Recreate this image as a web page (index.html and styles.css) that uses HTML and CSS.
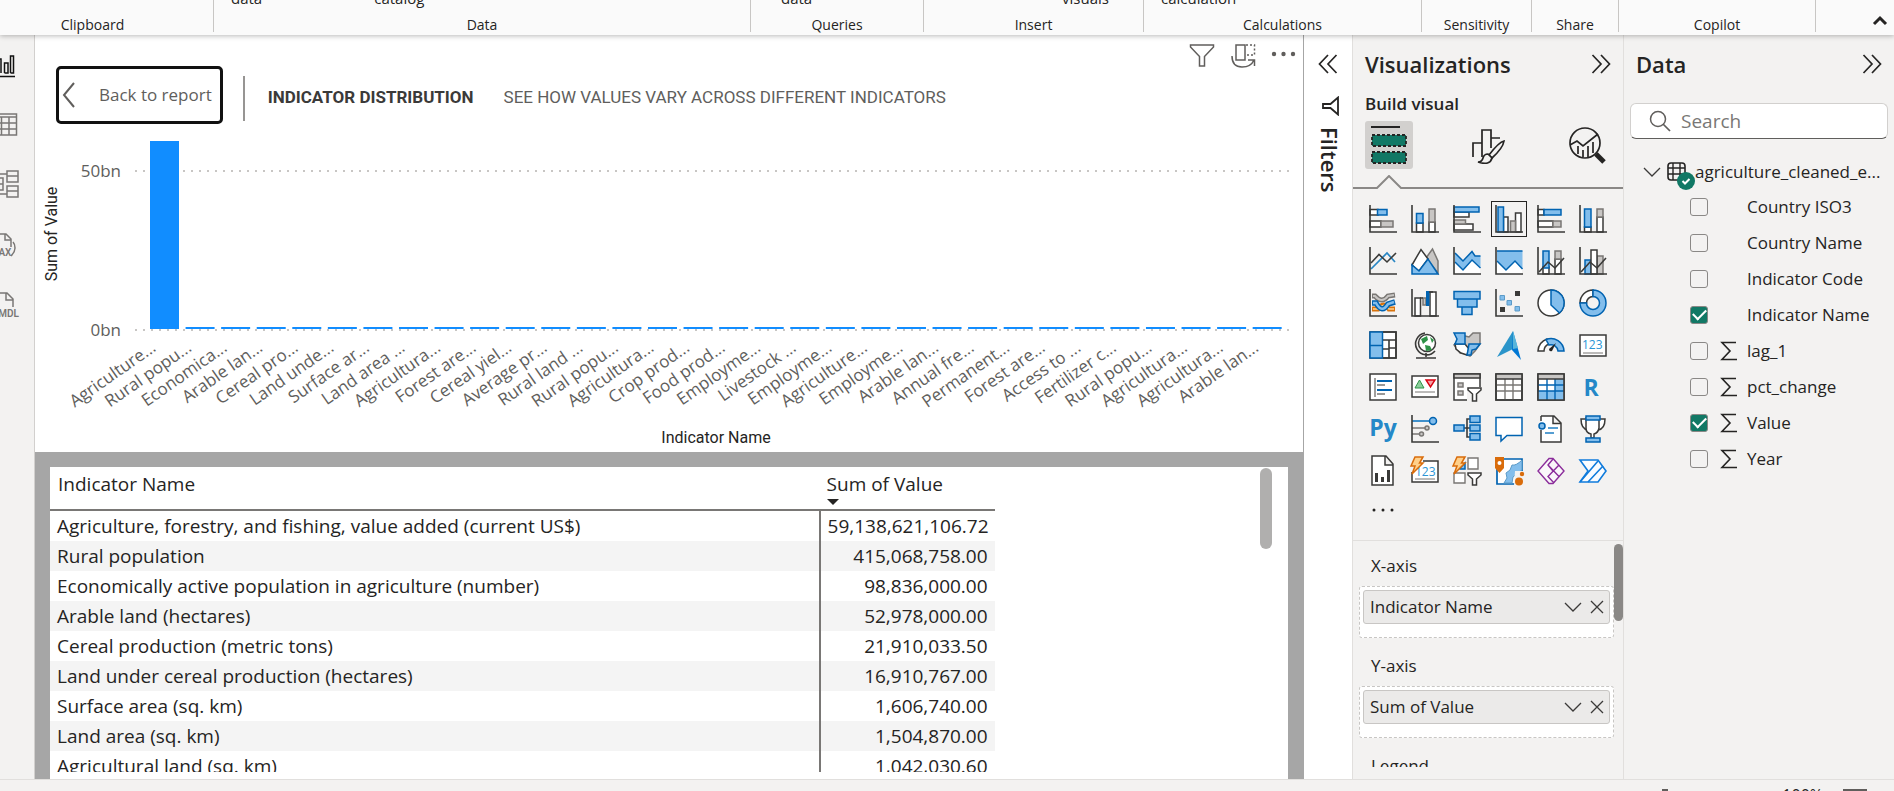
FILE: index.html
```html
<!DOCTYPE html>
<html lang="en">
<head>
<meta charset="utf-8">
<title>Indicator distribution</title>
<meta name="viewport" content="width=device-width, initial-scale=1">
<link rel="stylesheet" href="styles.css">
</head>
<body>
<header class="ribbon">
  <div class="group group-clipboard"><div class="group-name">Clipboard</div></div>
  <div class="group"><div class="tools"><span>data</span><span>catalog</span></div><div class="group-name">Data</div></div>
  <div class="group"><div class="tools tools-mid"><span>data</span></div><div class="group-name">Queries</div></div>
  <div class="group"><div class="tools tools-end"><span>visuals</span></div><div class="group-name">Insert</div></div>
  <div class="group"><div class="tools"><span>calculation</span></div><div class="group-name">Calculations</div></div>
  <div class="group"><div class="group-name">Sensitivity</div></div>
  <div class="group"><div class="group-name">Share</div></div>
  <div class="group"><div class="group-name">Copilot</div></div>
  <div class="group-last"><button class="plain" aria-label="Collapse ribbon"><svg width="16" height="12" viewBox="0 0 16 12"><path d="M2 9l6-6 6 6" fill="none" stroke="#252423" stroke-width="3"/></svg></button></div>
</header>

<div class="workspace">
  <nav class="rail" aria-label="Views">
    <button class="plain" aria-label="Report view"><svg width="35" height="28" viewBox="0 0 35 28" fill="none" stroke="#111" stroke-width="1.5"><path d="M-2 8H1V22M4.500 22V12H8V22H4.500M10.500 22V5H13.500V22H10.500M-3 25.500H15"/></svg></button>
    <button class="plain" aria-label="Table view"><svg width="35" height="28" viewBox="0 0 35 28" fill="none" stroke="#797775" stroke-width="1.5"><path d="M-2 3H16.500V24H-2M-2 6H16M-2 12H16M-2 18H16M1.500 6V24M9 6V24"/></svg></button>
    <button class="plain" aria-label="Model view"><svg width="35" height="30" viewBox="0 0 35 30" fill="none" stroke="#797775" stroke-width="1.5"><path d="M7 1H18V12H7zM7 6H18M7 16H18V27H7zM7 21H18M-2 8H3V20H-2M-2 14H3M-1 4H7M-1 24H7"/></svg></button>
    <button class="plain" aria-label="DAX query view"><svg width="35" height="28" viewBox="0 0 35 28" fill="none" stroke="#797775" stroke-width="1.5"><path d="M-2 3H6L11 8V16M5 3V9H11M13 11q2 2 2 6t-4 8"/><text x="-8" y="25" class="rail-text">DAX</text></svg></button>
    <button class="plain" aria-label="TMDL view"><svg width="35" height="28" viewBox="0 0 35 28" fill="none" stroke="#797775" stroke-width="1.5"><path d="M-2 2H7L13 8V16M6 2V9H13"/><text x="-8" y="26" class="rail-text">TMDL</text></svg></button>
  </nav>

  <main class="canvas">
    <section class="visual">
      <div class="visual-head">
        <button class="back"><svg width="14" height="28" viewBox="0 0 14 28"><path d="M12 2L2 14 12 26" fill="none" stroke="#605e5c" stroke-width="2"/></svg><span>Back to report</span></button>
        <div class="titles"><h1>INDICATOR DISTRIBUTION</h1><p>SEE HOW VALUES VARY ACROSS DIFFERENT INDICATORS</p></div>
        <div class="visual-tools">
          <button class="plain" aria-label="Filters on this visual"><svg width="26" height="26" viewBox="0 0 26 26"><path d="M1.500 2H24.500V4L15.500 13.500V23H10.500V13.500L1.500 4z" fill="none" stroke="#605e5c" stroke-width="1.5"/></svg></button>
          <button class="plain" aria-label="Switch layout"><svg width="26" height="26" viewBox="0 0 26 26" fill="none" stroke="#605e5c" stroke-width="1.5"><path d="M6 2H15V17H6zM2 13q0 11 10 11 9 0 12-7M18 17H24.500V23"/><path d="M16 2H24.500V12H16" stroke-dasharray="2 2"/></svg></button>
          <button class="plain" aria-label="More options"><svg width="26" height="26" viewBox="0 0 26 26" fill="#605e5c"><circle cx="3" cy="11" r="2.200"/><circle cx="12.500" cy="11" r="2.200"/><circle cx="22" cy="11" r="2.200"/></svg></button>
        </div>
      </div>
      <svg class="chart" id="chart" viewBox="0 0 1268 328" role="img" aria-label="Sum of Value by Indicator Name"></svg>
    </section>
    <section class="data-area">
      <div class="data-sheet">
        <div class="table-clip">
        <table>
          <thead><tr><th scope="col">Indicator Name</th><th scope="col" class="value-col">Sum of Value<svg class="sort" width="12" height="8" viewBox="0 0 12 8"><path d="M0 1H12L6 7z" fill="#252423"/></svg></th></tr></thead>
          <tbody>
            <tr><td>Agriculture, forestry, and fishing, value added (current US$)</td><td>59,138,621,106.72</td></tr>
            <tr><td>Rural population</td><td>415,068,758.00</td></tr>
            <tr><td>Economically active population in agriculture (number)</td><td>98,836,000.00</td></tr>
            <tr><td>Arable land (hectares)</td><td>52,978,000.00</td></tr>
            <tr><td>Cereal production (metric tons)</td><td>21,910,033.50</td></tr>
            <tr><td>Land under cereal production (hectares)</td><td>16,910,767.00</td></tr>
            <tr><td>Surface area (sq. km)</td><td>1,606,740.00</td></tr>
            <tr><td>Land area (sq. km)</td><td>1,504,870.00</td></tr>
            <tr><td>Agricultural land (sq. km)</td><td>1,042,030.60</td></tr>
          </tbody>
        </table>
        </div>
        <div class="table-thumb"></div>
      </div>
    </section>
  </main>

  <aside class="filters">
    <button class="plain" aria-label="Expand filters"><svg width="20" height="20" viewBox="0 0 20 20"><path d="M10 1L1.500 10 10 19M18.500 1L10 10 18.500 19" fill="none" stroke="#252423" stroke-width="1.700"/></svg></button>
    <svg class="filters-icon" width="20" height="20" viewBox="0 0 20 20"><path d="M17 1.500V18.500L9.500 12H2V8H9.500z" fill="none" stroke="#252423" stroke-width="1.800"/></svg>
    <h2>Filters</h2>
  </aside>

  <aside class="pane viz">
    <div class="pane-head"><h2>Visualizations</h2><button class="plain" aria-label="Collapse visualizations"><svg width="20" height="20" viewBox="0 0 20 20"><path d="M1.500 1L10 10 1.500 19M10 1L18.500 10 10 19" fill="none" stroke="#252423" stroke-width="1.700"/></svg></button></div>
    <h3>Build visual</h3>
    <div class="tabs">
      <button class="tab tab-on" aria-label="Build visual"><svg width="36" height="40" viewBox="0 0 36 40"><path d="M0 2H29" stroke="#252423" stroke-width="2"/><rect x="1" y="10" width="34" height="11" fill="#117865" stroke="#252423" stroke-width="1.800" stroke-dasharray="3 2"/><rect x="1" y="27" width="34" height="11" fill="#117865" stroke="#252423" stroke-width="1.800" stroke-dasharray="3 2"/></svg></button>
      <button class="tab" aria-label="Format visual"><svg width="36" height="38" viewBox="0 0 36 38" fill="none" stroke="#252423" stroke-width="1.700"><path d="M3 31V17H12M12 31V4H21V22M21 12H30"/><path d="M34 15q-5 1-15 14l3 3q11-10 12-17z" fill="#f3f2f1"/><path d="M18 28q-4 0-5 4-1 4-5 4 12 4 14-4z" fill="#f3f2f1"/></svg></button>
      <button class="tab" aria-label="Analytics"><svg width="38" height="38" viewBox="0 0 38 38" fill="none" stroke="#252423" stroke-width="1.700"><circle cx="17" cy="17" r="15"/><path d="M2 19l7-4 6 5L30 8M10 20V28M15 24V31M20 20V31M25 16V27"/><path d="M28 28l8 8" stroke-width="5"/></svg></button>
    </div>
    <div class="tab-edge"><span></span><svg width="26" height="14" viewBox="0 0 26 14"><path d="M0 13H1L13 1 25 13H26" fill="none" stroke="#8a8886" stroke-width="2"/></svg><span class="rest"></span></div>

    <div class="gallery">
      <button aria-label="Stacked bar chart"><svg viewBox="0 0 28 28"><path class="w" d="M1 4.500H9V10H1zM1 16H12V22H1z"/><path class="g" d="M12 16H24V22H12z"/><path class="b" d="M8.500 4.500H18V10H8.500z"/><path class="ax" d="M1 0V27H28"/></svg></button>
      <button aria-label="Stacked column chart"><svg viewBox="0 0 28 28"><path class="w" d="M5.500 18H12V27H5.500zM18 17H24V27H18z"/><path class="g" d="M18 4H24V17H18z"/><path class="b" d="M5.500 8.500H12V18H5.500z"/><path class="ax" d="M1 0V27H28"/></svg></button>
      <button aria-label="Clustered bar chart"><svg viewBox="0 0 28 28"><path class="w" d="M1 7H16V12H1zM1 19H20V25H1z"/><path class="g" d="M1 15H12.500V19H1z"/><path class="b" d="M1 2H26V7H1z"/><path class="ax" d="M1 0V27H28"/></svg></button>
      <button class="picked" aria-label="Clustered column chart" aria-pressed="true"><svg viewBox="0 0 28 28"><path class="w" d="M8.500 12H13V27H8.500zM20.500 8H26V27H20.500z"/><path class="g" d="M15.500 16H20.500V27H15.500z"/><path class="b" d="M3 2H8.500V27H3z"/><path class="ax" d="M1 0V27H28"/></svg></button>
      <button aria-label="100% stacked bar chart"><svg viewBox="0 0 28 28"><path class="w" d="M1 4.500H7V10H1zM1 16H16V22H1z"/><path class="g" d="M16 16H24V22H16z"/><path class="b" d="M7 4.500H24V10H7z"/><path class="ax" d="M1 0V27H28"/></svg></button>
      <button aria-label="100% stacked column chart"><svg viewBox="0 0 28 28"><path class="w" d="M5.500 22H12V27H5.500zM18 12H24V27H18z"/><path class="g" d="M18 4H24V12H18z"/><path class="b" d="M5.500 4H12V22H5.500z"/><path class="ax" d="M1 0V27H28"/></svg></button>

      <button aria-label="Line chart"><svg viewBox="0 0 28 28"><path d="M2 22L18 6 26 15" fill="none" stroke="#2886c4" stroke-width="1.700"/><path class="d" d="M2 16L10 7.500 18 15 27 6"/><path class="ax" d="M1 0V27H28"/></svg></button>
      <button aria-label="Area chart"><svg viewBox="0 0 28 28"><path class="g" d="M15 11L21.500 2 27 14V26z"/><path class="w" d="M1 18L10 2.500 17 12 8 24z"/><path class="b" d="M1 18L8 24 17 12 27 27H1z"/></svg></button>
      <button aria-label="Stacked area chart"><svg viewBox="0 0 28 28"><path fill="#fff" d="M2 14V27H27V14z"/><path fill="#83beec" d="M2 6L10 14 19 4.500 22 9H27.500V20L19 13 10 23 2 15z"/><path class="l" d="M2 6L10 14 19 4.500 22 9H27.500M2 15L10 23 19 13 27.500 21"/><path class="ax" d="M1 0V27H28"/></svg></button>
      <button aria-label="100% stacked area chart"><svg viewBox="0 0 28 28"><path fill="#fff" d="M2 14V27H27V14z"/><path fill="#83beec" d="M2 4H27.500V22L20 14 11 23 2 14z"/><path class="l" d="M2 4H27.500M2 14L11 23 20 14 27.500 22"/><path class="ax" d="M1 0V27H28"/></svg></button>
      <button aria-label="Line and stacked column chart"><svg viewBox="0 0 28 28"><path class="w" d="M6 20H12V27H6zM18 12H24V27H18z"/><path class="g" d="M18 4H24V12H18z"/><path class="b" d="M6 4H12V21H6z"/><path class="d" d="M2 25L11 15 18 21 27 11"/><path class="ax" d="M1 0V27H28"/></svg></button>
      <button aria-label="Line and clustered column chart"><svg viewBox="0 0 28 28"><path class="g" d="M18 9H24V27H18z"/><path class="b" d="M6 13H12V27H6z"/><path class="w" d="M12 3H18V27H12z"/><path class="d" d="M2 25L11 15 18 21 27 11"/><path class="ax" d="M1 0V27H28"/></svg></button>

      <button aria-label="Ribbon chart"><svg viewBox="0 0 28 28" fill="none"><path d="M3 20H9q6-8 11 0h6" stroke="#d9730d" stroke-width="5"/><path d="M4 20H9q6-7 11 0h5" stroke="#ffd591" stroke-width="1.5"/><path d="M3 7H6q7 8 13 0l7-1" stroke="#797774" stroke-width="5"/><path d="M4 7H6q7 8 13 0l6-1" stroke="#c8c6c4" stroke-width="2"/><path d="M3 14h4q6 11 12 1l7-2" stroke="#0063b1" stroke-width="5.500"/><path d="M4 14h3q6 11 12 1l6-2" stroke="#83beec" stroke-width="2.500"/><path class="ax" d="M1 0V27H28"/></svg></button>
      <button aria-label="Waterfall chart"><svg viewBox="0 0 28 28"><path class="w" d="M4 9H9.500V27H4zM19 3H25V27H19z"/><path class="g" d="M12 9H15V16H12z"/><path d="M15 2H18.500V17H15z" fill="#0063b1"/><path class="d" d="M9 9H12M18 3H22"/><path class="ax" d="M1 0V27H28"/></svg></button>
      <button aria-label="Funnel chart"><svg viewBox="0 0 28 28"><path class="b" d="M1 2.500H27V10H1zM4.500 10H24V18H4.500zM9 18H19V25.500H9z"/></svg></button>
      <button aria-label="Scatter chart"><svg viewBox="0 0 28 28"><path d="M20 2H25V7H20zM5 18H10V23H5z" fill="#3a3a38"/><path d="M5 6.500H9.500V11H5zM12 11.500H16.500V16H12zM20 17.500H24.500V22H20z" fill="#83beec" stroke="#5b9bc8"/><path class="ax" d="M1 0V27H28"/></svg></button>
      <button aria-label="Pie chart"><svg viewBox="0 0 28 28"><circle class="w" cx="14" cy="14" r="13"/><path class="b" d="M14 1A13 13 0 0 1 22.500 24L14 16z"/></svg></button>
      <button aria-label="Donut chart"><svg viewBox="0 0 28 28"><path class="w" d="M14 1A13 13 0 0 0 1 14H7.500A6.500 6.500 0 0 1 14 7.500z"/><path class="b" d="M14 1A13 13 0 1 1 1 14H7.500A6.500 6.500 0 1 0 14 7.500z"/></svg></button>

      <button aria-label="Treemap"><svg viewBox="0 0 28 28"><path class="w" d="M1 1H27V27H1z"/><path class="b" d="M1 1H13.500V27H1zM1 14.500H13.500"/><path class="d" d="M14 9H27M20 9V27M14 18H20M20 17H27M14 1H27V27H14"/></svg></button>
      <button aria-label="Map"><svg viewBox="0 0 28 28"><circle class="w" cx="16" cy="12" r="8.500"/><path d="M10 8l6-3 1 4-5 4zM19 6l4 3-2 3zM14 14l5 1 2 4-6 1z" fill="#2d9246"/><path class="d" d="M14 2A11 11 0 1 0 24 20M15 22V26M5 27H25"/></svg></button>
      <button aria-label="Filled map"><svg viewBox="0 0 28 28"><path class="g" d="M12 5L16 6 20 2H27V13L22 20 17 25 10 22 7 22 1 14z"/><path class="w" d="M2 13H12L16 18 14 24 8 22 3 18z"/><path class="b" d="M1 2H12V13H2L4 8zM16 13H27L23 18 19 19 18 24 14 24 15 19z"/></svg></button>
      <button aria-label="Azure map"><svg viewBox="0 0 28 28"><path d="M18 0L2 26 18 18z" fill="#2b95ca"/><path d="M18 0L26 29 17 19z" fill="#0078d4"/><path d="M18 0L23 17 18 18z" fill="#58b5da"/></svg></button>
      <button aria-label="Gauge"><svg viewBox="0 0 28 28"><path class="w" d="M1 20A13 13 0 0 1 10 8L12 13Q7 15 7 20z"/><path class="b" d="M9 8.500A13 13 0 0 1 27 20H21A7 7 0 0 0 12 14z"/><path d="M12 18L19 12 15 20q-3 1-3-2z" fill="#252423"/></svg></button>
      <button aria-label="Card"><svg viewBox="0 0 28 28"><path class="w" d="M1 4H27V25H1z"/><text x="3" y="18" class="num">123</text><path d="M4 22H24" stroke="#797774"/></svg></button>

      <button aria-label="Multi-row card"><svg viewBox="0 0 28 28"><path class="w" d="M1 1H27V27H1z"/><path d="M6 5V24M8 12H16M8 21H16" stroke="#797774" stroke-width="1.400"/><path d="M8 8H23M8 17H23" stroke="#0063b1" stroke-width="2.200"/></svg></button>
      <button aria-label="KPI"><svg viewBox="0 0 28 28"><path class="w" d="M1 3H27V24H1z"/><path d="M4 15L8.500 7 13 15z" fill="#8ccf9c" stroke="#2d9246"/><path d="M15 7H24L19.500 14z" fill="#f5a3a8" stroke="#d8000f" stroke-width="1.400"/><path d="M4 19H24" stroke="#797774"/></svg></button>
      <button aria-label="Slicer"><svg viewBox="0 0 28 28"><path class="w" d="M1 1H27V27H1z"/><path class="g" d="M5 10H10V14H5zM5 18H10V22H5z"/><path d="M1 1H27V5H1z" fill="#c8c6c4" stroke="#3a3a38" stroke-width="1.5"/><path d="M14 14H29V29H14z" fill="#f3f2f1"/><path class="w" d="M15 15H28V17L23.500 21V28H19.500V21L15 17z"/></svg></button>
      <button aria-label="Table"><svg viewBox="0 0 28 28"><path class="w" d="M1 1H27V27H1z"/><path d="M1 1H27V6H1z" fill="#c8c6c4"/><path d="M1 12H27M1 18H27M10 6V27M18 6V27" stroke="#797774" stroke-width="1.400"/><path class="d" d="M1 1H27V27H1zM1 6H27"/></svg></button>
      <button aria-label="Matrix"><svg viewBox="0 0 28 28"><path class="w" d="M1 1H27V27H1z"/><path d="M1 18H18V6H27V27H1z" fill="#83beec"/><path d="M1 1H27V6H1z" fill="#c8c6c4"/><path d="M1 12H27M1 18H27M10 6V27M18 6V27" stroke="#0063b1" stroke-width="1.400"/><path class="d" d="M1 1H27V27H1zM1 6H27"/></svg></button>
      <button aria-label="R script visual"><svg viewBox="0 0 28 28"><text x="12" y="23" text-anchor="middle" class="lang">R</text></svg></button>

      <button aria-label="Python visual"><svg viewBox="0 0 28 28"><text x="14" y="21" text-anchor="middle" class="lang">Py</text></svg></button>
      <button aria-label="Key influencers"><svg viewBox="0 0 28 28"><path d="M1 6H20" stroke="#1f7fc4" stroke-width="1.700"/><path d="M1 13H14M1 19H9" stroke="#797774" stroke-width="1.5"/><circle class="b" cx="22" cy="6" r="3.500"/><circle class="g" cx="16" cy="13" r="2"/><circle class="g" cx="10.500" cy="19" r="2"/><path class="ax" d="M1 0V27H28"/></svg></button>
      <button aria-label="Decomposition tree"><svg viewBox="0 0 28 28"><path class="d" d="M11 13H17M17 4H14V22H17"/><path class="b" d="M1 10H11V16H1zM17 1H27V7.500H17zM17 10H27V16H17zM17 18.500H27V25H17z"/></svg></button>
      <button aria-label="Q&amp;A"><svg viewBox="0 0 28 28"><path class="w wb" d="M1 2.500H27V20.500H12L6 26V20.500H1z"/></svg></button>
      <button aria-label="Narrative"><svg viewBox="0 0 28 28"><path class="w" d="M4 1H17L24 8V27H4V15M4 6V1M16 1V8.500H24"/><circle class="b" cx="5" cy="11" r="3"/><path d="M11 13H21M8 18H17" stroke="#1f7fc4" stroke-width="1.5"/></svg></button>
      <button aria-label="Goals"><svg viewBox="0 0 28 28"><path class="w" d="M7 4H2q0 10 7 11M20 4h6q0 10-7 11"/><path class="w" d="M7 3H20V13q-1 5-5 6v4H12V19q-5-1-5-6z"/><path class="b" d="M7 1H21V5H7zM7 23H21V27H7z"/></svg></button>

      <button aria-label="Paginated report"><svg viewBox="0 0 28 28"><path class="w" d="M3 -1H17L24 7V28H3zM16 -1V8H24"/><path d="M6 16H9V25H6zM12 20H15V25H12zM18 13H21V25H18z" fill="#3a3a38"/></svg></button>
      <button aria-label="Card (new)"><svg viewBox="0 0 28 28"><path class="w" d="M12 4H27V25H1V15"/><text x="4" y="19" class="num">123</text><path d="M4 22H24" stroke="#797774"/><path class="bolt" d="M4 0H12L8.500 6H12L1 17 4 9H0z"/></svg></button>
      <button aria-label="Slicer (new)"><svg viewBox="0 0 28 28"><path d="M15 1H25V12H15zM1 16H12V26H1zM15 16H20V20" fill="#fff" stroke="#797774" stroke-width="1.400"/><path class="b" d="M7 11L12 6V12H7z"/><path d="M14 15H29V29H14z" fill="#f3f2f1"/><path class="w" d="M15 16H28V18L23.500 22V28H19.500V22L15 18z"/><path class="bolt" d="M4 0H12L8.500 6H12L1 17 4 9H0z"/></svg></button>
      <button aria-label="ArcGIS map"><svg viewBox="0 0 28 28"><path d="M2 2H27V27H2z" fill="#fff" stroke="#0063b1" stroke-width="1.700"/><path d="M27 3q-6 6-10 5l-2 5-4 3 1 5-3 5H17l1-6 6-5 3-2z" fill="#83beec" stroke="#5b9bc8"/><path d="M20 14h9v14h-10z" fill="#f3f2f1"/><path d="M0 0H9V11L4.500 16 0 11z" fill="#d96c0b"/><circle cx="4.500" cy="6" r="2" fill="#fff"/><circle cx="24" cy="24.500" r="4" fill="#d96c0b"/><circle cx="27" cy="17" r="2.200" fill="#d96c0b"/></svg></button>
      <button aria-label="Power Apps"><svg viewBox="0 0 28 28" fill="#faf7fa" stroke="#8b2d9b" stroke-width="1.400"><path d="M12 1.500L1 14 12 26.500 16 26.500 27 14 16 1.500z"/><path d="M16 2L11 8 22 19.500M22 8L11 19.500 17 26M11 8L16 14" fill="none"/></svg></button>
      <button aria-label="Power Automate"><svg viewBox="0 0 28 28" fill="#fafcff" stroke="#0f7bdc" stroke-width="1.600"><path d="M1 3H19L27 14 19 25H1L9 14z"/><path d="M9 25L24 9M1 25L19 4" fill="none"/></svg></button>
    </div>
    <button class="plain more" aria-label="Get more visuals"><svg width="24" height="8" viewBox="0 0 24 8" fill="#252423"><circle cx="3" cy="4" r="1.500"/><circle cx="12" cy="4" r="1.500"/><circle cx="21" cy="4" r="1.500"/></svg></button>

    <div class="wells">
      <div class="well-list">
        <h4>X-axis</h4>
        <div class="well"><div class="chip"><span>Indicator Name</span><button class="plain" aria-label="Indicator Name options"><svg width="18" height="12" viewBox="0 0 18 12"><path d="M1 2L9 10 17 2" fill="none" stroke="#3b3a39" stroke-width="1.300"/></svg></button><button class="plain" aria-label="Remove Indicator Name"><svg width="14" height="14" viewBox="0 0 14 14"><path d="M1 1L13 13M13 1L1 13" fill="none" stroke="#3b3a39" stroke-width="1.300"/></svg></button></div></div>
        <h4>Y-axis</h4>
        <div class="well"><div class="chip"><span>Sum of Value</span><button class="plain" aria-label="Sum of Value options"><svg width="18" height="12" viewBox="0 0 18 12"><path d="M1 2L9 10 17 2" fill="none" stroke="#3b3a39" stroke-width="1.300"/></svg></button><button class="plain" aria-label="Remove Sum of Value"><svg width="14" height="14" viewBox="0 0 14 14"><path d="M1 1L13 13M13 1L1 13" fill="none" stroke="#3b3a39" stroke-width="1.300"/></svg></button></div></div>
        <h4>Legend</h4>
      </div>
      <div class="wells-thumb"></div>
    </div>
  </aside>

  <aside class="pane fields">
    <div class="pane-head"><h2>Data</h2><button class="plain" aria-label="Collapse data"><svg width="20" height="20" viewBox="0 0 20 20"><path d="M1.500 1L10 10 1.500 19M10 1L18.500 10 10 19" fill="none" stroke="#252423" stroke-width="1.700"/></svg></button></div>
    <label class="search"><svg width="22" height="22" viewBox="0 0 22 22"><circle cx="9" cy="9" r="7.500" fill="none" stroke="#605e5c" stroke-width="1.5"/><path d="M14 14L21 21" stroke="#605e5c" stroke-width="1.700"/></svg><input type="search" placeholder="Search" aria-label="Search"></label>
    <div class="source"><svg width="18" height="12" viewBox="0 0 18 12"><path d="M1 2L9 10 17 2" fill="none" stroke="#3b3a39" stroke-width="1.300"/></svg><svg class="source-icon" width="28" height="28" viewBox="0 0 28 28" fill="none"><rect x="1" y="1" width="17" height="17" rx="3" stroke="#252423" stroke-width="1.600"/><path d="M1 6H18M1 12H18M6 1V18M13 1V18" stroke="#252423" stroke-width="1.400"/><circle cx="19" cy="19" r="9" fill="#117865"/><path d="M15.500 19l2.500 2.500 4.500-4.500" stroke="#fff" stroke-width="2"/></svg><span>agriculture_cleaned_e...</span></div>
    <ul class="field-list">
      <li><label><input type="checkbox"><i></i><span>Country ISO3</span></label></li>
      <li><label><input type="checkbox"><i></i><span>Country Name</span></label></li>
      <li><label><input type="checkbox"><i></i><span>Indicator Code</span></label></li>
      <li><label><input type="checkbox" checked><i></i><span>Indicator Name</span></label></li>
      <li><label><input type="checkbox"><svg class="sigma" viewBox="0 0 18 20"><path d="M16 1.500H2L10 10 2 18.500H17" fill="none" stroke="#252423" stroke-width="1.600"/></svg><span>lag_1</span></label></li>
      <li><label><input type="checkbox"><svg class="sigma" viewBox="0 0 18 20"><path d="M16 1.500H2L10 10 2 18.500H17" fill="none" stroke="#252423" stroke-width="1.600"/></svg><span>pct_change</span></label></li>
      <li><label><input type="checkbox" checked><svg class="sigma" viewBox="0 0 18 20"><path d="M16 1.500H2L10 10 2 18.500H17" fill="none" stroke="#252423" stroke-width="1.600"/></svg><span>Value</span></label></li>
      <li><label><input type="checkbox"><svg class="sigma" viewBox="0 0 18 20"><path d="M16 1.500H2L10 10 2 18.500H17" fill="none" stroke="#252423" stroke-width="1.600"/></svg><span>Year</span></label></li>
    </ul>
  </aside>
</div>

<footer class="status"><i class="zoom-knob"></i><span>100%</span><i class="fit"></i></footer>
<script src="chart.js"></script>
</body>
</html>
```
FILE: styles.css
```css
* { box-sizing: border-box; }
html, body { height: 100%; }
body {
  margin: 0;
  display: flex;
  flex-direction: column;
  overflow: hidden;
  background: #f3f2f1;
  color: #252423;
  font: 17px/20px "Open Sans", "Noto Sans", sans-serif;
}
h1, h2, h3, h4, p, ul { margin: 0; padding: 0; font: inherit; }
ul { list-style: none; }
button { font: inherit; color: inherit; cursor: pointer; }
svg { display: block; flex: none; }
.plain { border: 0; padding: 0; background: none; display: flex; align-items: center; }

/* Ribbon */
.ribbon {
  flex: none;
  height: 35px;
  display: grid;
  grid-template-columns: 214fr 537fr 173fr 220fr 278fr 110fr 87fr 197fr 78fr;
  background: #fafafa;
  box-shadow: 0 1px 5px rgba(0, 0, 0, .28);
  position: relative;
  z-index: 1;
  font-size: 14px;
}
.group {
  height: 32px;
  border-right: 1px solid #c8c6c4;
  display: flex;
  flex-direction: column;
  justify-content: flex-end;
  min-width: 0;
}
.group-name { text-align: center; line-height: 14px; }
.group-clipboard { padding-right: 28px; }
.group-last { display: flex; justify-content: flex-end; padding: 15px 6px 0; align-items: flex-start; }
.tools { display: flex; padding: 0 34px 10px 17px; line-height: 20px; gap: 112px; font-size: 15px; }
.tools-mid { padding-left: 30px; }
.tools-end { justify-content: flex-end; }

.workspace { flex: 1; min-height: 0; display: grid; grid-template-columns: 35px minmax(0, 1fr) 50px 270px 271px; }

.rail { border-right: 1px solid #d2d0ce; display: flex; flex-direction: column; overflow: hidden; }
.rail button { height: 60px; }
.rail-text { font: 600 10px Roboto, sans-serif; fill: #797775; stroke: none; }

/* Canvas */
.canvas { display: flex; flex-direction: column; min-height: 0; background: #fff; }
.visual { flex: none; }
.visual-head { display: flex; padding: 8px 6px 0 21px; }
.back {
  margin-top: 23px;
  height: 58px;
  padding: 0 8px 0 3px;
  display: flex;
  align-items: center;
  gap: 23px;
  border: 3px solid #111;
  border-radius: 5px;
  background: #fff;
  color: #605e5c;
  white-space: nowrap;
}
.titles {
  margin: 33px 0 0 20px;
  padding: 0 0 4px 23px;
  height: 45px;
  display: flex;
  align-items: center;
  gap: 30px;
  border-left: 2px solid #979593;
  font: 17px/20px Roboto, sans-serif;
  color: #605e5c;
  white-space: nowrap;
}
.titles h1 { font-weight: 700; color: #3b3a39; }
.visual-tools { margin-left: auto; display: flex; gap: 15px; align-items: flex-start; }
.chart { width: 100%; height: auto; }
.chart .tick { font: 17px "Open Sans", "Noto Sans", sans-serif; fill: #605e5c; }
.chart .axis-title { font: 16px Roboto, sans-serif; fill: #252423; }
.chart .gridline { stroke: #c8c6c4; stroke-width: 2; stroke-dasharray: 2 6; }
.chart .bar { fill: #118dff; }

.data-area { flex: 1; min-height: 0; padding: 15px 15px 0; background: #a6a6a6; display: flex; }
.data-sheet { flex: 1; background: #fff; display: flex; padding-bottom: 7px; min-height: 0; }
.table-clip { overflow: hidden; width: 76.3%; }
table { width: 100%; border-collapse: separate; border-spacing: 0; font-size: 19px; table-layout: fixed; }
th { text-align: left; font-weight: 400; height: 44px; padding: 7px 8px 3px; vertical-align: top; border-bottom: 2px solid #797775; line-height: 20px; }
.value-col { width: 176px; }
.sort { margin-top: 4px; }
td { height: 30px; padding: 0 7px; line-height: 30px; white-space: nowrap; }
tbody tr:nth-child(even) { background: #f4f4f4; }
td:last-child { text-align: right; border-left: 2px solid #797775; }
.table-thumb { width: 12px; height: 81px; margin: 1px 16px 0 auto; border-radius: 6px; background: #b0afae; }

/* Filters strip */
.filters { background: #fff; border-left: 1px solid #a6a6a6; border-right: 1px solid #e1dfdd; padding: 19px 12px 0 14px; display: flex; flex-direction: column; }
.filters-icon { margin: 22px 0 11px 3px; }
.filters h2 { writing-mode: vertical-rl; font-size: 22px; line-height: 20px; font-weight: 600; }

/* Side panes */
.pane { min-height: 0; display: flex; flex-direction: column; }
.pane-head { flex: none; height: 60px; padding: 0 12px 2px; display: flex; align-items: center; justify-content: space-between; }
.pane-head h2 { font-size: 22px; font-weight: 600; line-height: 28px; }
.viz { overflow: hidden; }
.viz h3 { padding: 0 12px; font-weight: 600; line-height: 18px; }
.tabs { display: flex; justify-content: space-between; padding: 8px 12px 0; }
.tab { width: 48px; height: 48px; border: 0; border-radius: 3px; padding: 0; background: none; display: grid; place-items: center; }
.tab-on { background: #d2d0ce; }
.tab-edge { display: flex; align-items: flex-end; margin-top: 6px; }
.tab-edge span { width: 23px; border-bottom: 2px solid #8a8886; }
.tab-edge .rest { flex: 1; }
.gallery { display: grid; grid-template-columns: repeat(6, 36px); gap: 6px; padding: 12px 12px 0; }
.gallery button { width: 36px; height: 36px; padding: 3px; border: 1px solid transparent; background: none; }
.gallery .picked { border-color: #252423; }
.gallery svg { width: 28px; height: 28px; overflow: visible; }
.w { fill: #fff; stroke: #3a3a38; stroke-width: 1.5; }
.wb { stroke: #0063b1; }
.g { fill: #c8c6c4; stroke: #797774; stroke-width: 1.5; }
.b { fill: #83beec; stroke: #0063b1; stroke-width: 1.5; }
.l { fill: none; stroke: #0063b1; stroke-width: 1.5; }
.d, .ax { fill: none; stroke: #3a3a38; stroke-width: 1.6; }
.bolt { fill: #ffd08a; stroke: #d96c0b; stroke-width: 1.5; }
.num { font: 12px "Open Sans", sans-serif; fill: #2b95d6; }
.lang { font: 700 23px "Open Sans", sans-serif; fill: #2488c8; }
.more { margin: 17px 0 26px 18px; }

.wells { flex: 1; min-height: 0; border-top: 1px solid #e1dfdd; margin-bottom: 12px; display: flex; overflow: hidden; }
.well-list { flex: 1; padding: 4px 0 0 6px; }
.well-list h4 { line-height: 20px; padding: 11px 12px 10px; }
.well { height: 52px; margin-bottom: 7px; padding: 3px; background: #fff; border: 1px dashed #c8c6c4; border-radius: 3px; }
.chip { height: 34px; padding: 0 5px 0 6px; display: flex; align-items: center; gap: 8px; border: 1px solid #c8c6c4; border-radius: 3px; background: #ebeae9; }
.chip span { flex: 1; }
.wells-thumb { width: 9px; height: 77px; margin-top: 3px; border-radius: 5px; background: #8a8886; }

.fields { border-left: 1px solid #e1dfdd; }
.search { margin: 8px 6px 0; height: 36px; padding-left: 18px; display: flex; align-items: center; gap: 10px; background: #fff; border: 1px solid #d2d0ce; border-bottom-color: #605e5c; border-radius: 6px; }
.search input { flex: 1; min-width: 0; border: 0; padding: 0; outline: 0; background: none; font: 19px/24px "Open Sans", "Noto Sans", sans-serif; color: #252423; }
.search input::placeholder { color: #797775; opacity: 1; }
.source { display: flex; align-items: center; margin: 17px 0 0 19px; height: 32px; }
.source-icon { margin: 8px 0 0 6px; }
.source span { white-space: nowrap; }
.field-list { padding-top: 1px; }
.field-list label { display: flex; align-items: center; height: 36px; padding-left: 66px; }
.field-list input { appearance: none; width: 18px; height: 18px; margin: 0 12px 0 0; border: 1px solid #8a8886; border-radius: 3px; display: grid; place-items: center; }
.field-list input:checked { background: #117865; }
.field-list input:checked::before { content: ""; width: 11px; height: 6px; margin-bottom: 4px; border: solid #fff; border-width: 0 0 2px 2px; transform: rotate(-45deg); }
.field-list i, .sigma { width: 18px; height: 20px; margin-right: 9px; }

/* Status bar */
.status { flex: none; height: 12px; border-top: 1px solid #e1dfdd; display: flex; justify-content: flex-end; align-items: flex-start; padding: 9px 27px 0 0; overflow: hidden; font-size: 16px; line-height: 16px; }
.status span { margin: -2px 20px 0 114px; }
.zoom-knob { width: 6px; height: 16px; background: #605e5c; }
.fit { width: 24px; height: 16px; border: 2px solid #605e5c; background: #b0afae; }
```
FILE: chart.js
```js
const labels = [
  "Agriculture...", "Rural popu...", "Economica...", "Arable lan...", "Cereal pro...", "Land unde...",
  "Surface ar...", "Land area ...", "Agricultura...", "Forest are...", "Cereal yiel...", "Average pr...",
  "Rural land ...", "Rural popu...", "Agricultura...", "Crop prod...", "Food prod...", "Employme...",
  "Livestock ...", "Employme...", "Agriculture...", "Employme...", "Arable lan...", "Annual fre...",
  "Permanent...", "Forest are...", "Access to ...", "Fertilizer c...", "Rural popu...", "Agricultura...",
  "Agricultura...", "Arable lan..."
];
const base = 205;
const step = 35.57;
const first = 115;
const parts = [
  '<line class="gridline" x1="100" x2="1258" y1="47" y2="47"/>',
  '<line class="gridline" x1="100" x2="1258" y1="206" y2="206"/>',
  '<text class="tick" x="86" y="53" text-anchor="end">50bn</text>',
  '<text class="tick" x="86" y="212" text-anchor="end">0bn</text>',
  '<text class="axis-title" transform="translate(22 110) rotate(-90)" text-anchor="middle">Sum of Value</text>',
  '<text class="axis-title" x="681" y="319" text-anchor="middle">Indicator Name</text>'
];
labels.forEach((label, i) => {
  const x = first + i * step;
  const h = i === 0 ? 188 : 2;
  parts.push(`<rect class="bar" x="${x}" y="${base - h}" width="29" height="${h}"/>`);
  parts.push(`<text class="tick" transform="translate(${x + 7} 226) rotate(-35)" text-anchor="end">${label}</text>`);
});
document.getElementById("chart").innerHTML = parts.join("");
```
